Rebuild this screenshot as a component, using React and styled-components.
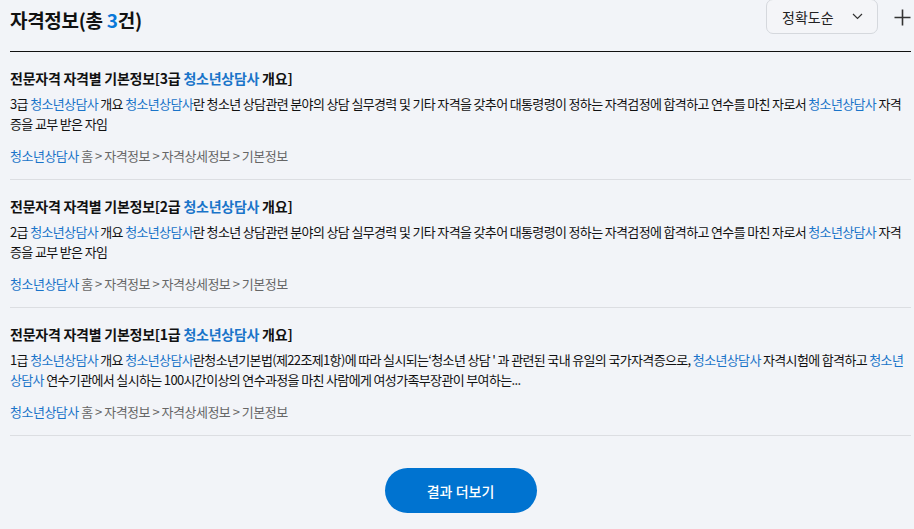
import React from "react";
import styled, { createGlobalStyle } from "styled-components";

const GlobalStyle = createGlobalStyle`
  html, body {
    margin: 0;
    padding: 0;
    background: #f2f4f8;
    font-family: "Noto Sans CJK KR", "Noto Sans", sans-serif;
    color: #111;
  }
`;

const items = [
  {
    grade: "3급",
    body: [
      "3급 ",
      { link: "청소년상담사" },
      " 개요 ",
      { link: "청소년상담사" },
      "란 청소년 상담관련 분야의 상담 실무경력 및 기타 자격을 갖추어 대통령령이 정하는 자격검정에 합격하고 연수를 마친 자로서 ",
      { link: "청소년상담사" },
      " 자격증을 교부 받은 자임",
    ],
  },
  {
    grade: "2급",
    body: [
      "2급 ",
      { link: "청소년상담사" },
      " 개요 ",
      { link: "청소년상담사" },
      "란 청소년 상담관련 분야의 상담 실무경력 및 기타 자격을 갖추어 대통령령이 정하는 자격검정에 합격하고 연수를 마친 자로서 ",
      { link: "청소년상담사" },
      " 자격증을 교부 받은 자임",
    ],
  },
  {
    grade: "1급",
    body: [
      "1급 ",
      { link: "청소년상담사" },
      " 개요 ",
      { link: "청소년상담사" },
      "란청소년기본법(제22조제1항)에 따라 실시되는‘청소년 상담 ' 과 관련된 국내 유일의 국가자격증으로, ",
      { link: "청소년상담사" },
      " 자격시험에 합격하고 ",
      { link: "청소년상담사" },
      " 연수기관에서 실시하는 100시간이상의 연수과정을 마친 사람에게 여성가족부장관이 부여하는...",
    ],
  },
];

const App = () => {
  return (
    <>
      <GlobalStyle />
      <Page>
        <Header>
          <Title>
            자격정보(총 <Count>3</Count>건)
          </Title>
          <Tools>
            <SortBox>
              <span>정확도순</span>
              <svg width="11" height="7" viewBox="0 0 11 7">
                <path d="M1 1l4.5 4.5L10 1" fill="none" stroke="#333" strokeWidth="1.2" />
              </svg>
            </SortBox>
            <PlusButton>
              <svg width="17" height="17" viewBox="0 0 17 17">
                <path d="M8.5 0.5v16M0.5 8.5h16" stroke="#333" strokeWidth="1.6" />
              </svg>
            </PlusButton>
          </Tools>
        </Header>

        <List>
          {items.map((item) => (
            <Item key={item.grade}>
              <ItemTitle>
                전문자격 자격별 기본정보[{item.grade} <Blue>청소년상담사</Blue> 개요]
              </ItemTitle>
              <Body>
                {item.body.map((part, i) =>
                  typeof part === "string" ? part : <Blue key={i}>{part.link}</Blue>
                )}
              </Body>
              <Crumbs>
                <Blue>청소년상담사</Blue> 홈 &gt; 자격정보 &gt; 자격상세정보 &gt; 기본정보
              </Crumbs>
            </Item>
          ))}
        </List>

        <More>
          <MoreButton>결과 더보기</MoreButton>
        </More>
      </Page>
    </>
  );
};

const Page = styled.div`
  padding: 0 3px 0 10px;
`;

const Header = styled.div`
  display: flex;
  justify-content: space-between;
  align-items: flex-start;
  height: 51px;
  border-bottom: 1px solid #111;
`;

const Title = styled.h2`
  margin: 6px 0 0;
  font-size: 19px;
  font-weight: 700;
  letter-spacing: -0.3px;
  color: #111;
`;

const Count = styled.span`
  color: #0a78d8;
`;

const Tools = styled.div`
  display: flex;
  align-items: center;
  gap: 16px;
`;

const SortBox = styled.div`
  box-sizing: border-box;
  width: 112px;
  height: 35px;
  margin-top: -1px;
  padding: 0 14px 0 15px;
  display: flex;
  align-items: center;
  justify-content: space-between;
  border: 1px solid #d5d8dd;
  border-radius: 7px;
  background: #f4f5f8;
  font-size: 14px;
  color: #222;
`;

const PlusButton = styled.div`
  display: flex;
  align-items: center;
`;

const List = styled.div`
  display: flex;
  flex-direction: column;
`;

const Item = styled.div`
  padding: 16px 0 13px;
  border-bottom: 1px solid #dcdee2;
`;

const ItemTitle = styled.div`
  font-size: 14px;
  font-weight: 700;
  color: #111;
  line-height: 20px;
  letter-spacing: -0.25px;
  margin-bottom: 6px;
`;

const Body = styled.div`
  font-size: 13px;
  line-height: 20px;
  color: #111;
  letter-spacing: -0.65px;
  margin-bottom: 12px;
`;

const Crumbs = styled.div`
  font-size: 13px;
  line-height: 20px;
  letter-spacing: -0.5px;
  color: #666;
`;

const Blue = styled.span`
  color: #1a74c9;
`;

const More = styled.div`
  display: flex;
  justify-content: center;
  padding-top: 32px;
`;

const MoreButton = styled.button`
  width: 152px;
  height: 45px;
  border: none;
  border-radius: 23px;
  background: #0073d0;
  color: #fff;
  font-family: inherit;
  font-size: 14px;
  font-weight: 500;
  cursor: pointer;
`;

export default App;
